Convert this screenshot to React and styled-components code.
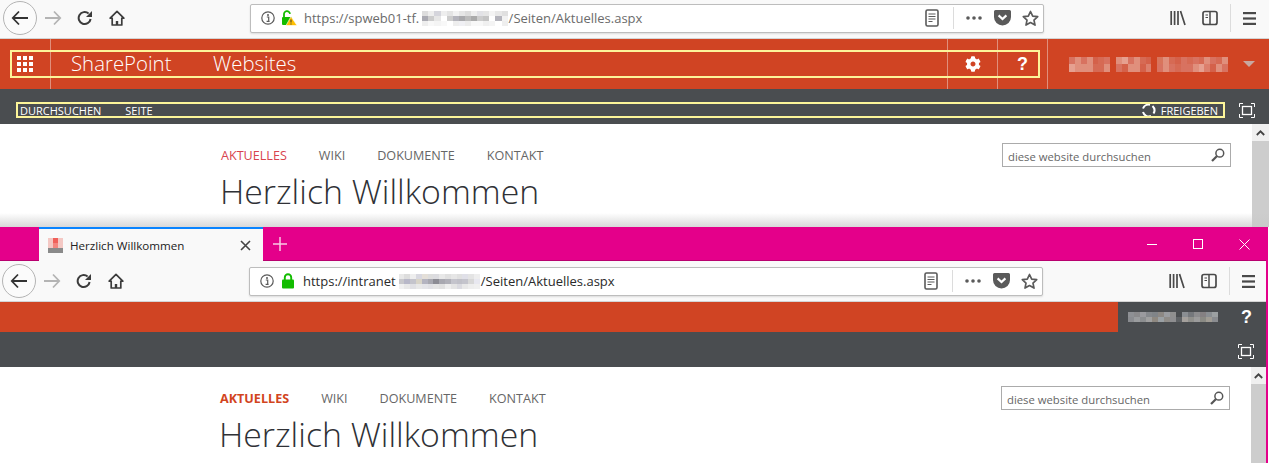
import styled, { createGlobalStyle } from "styled-components";
import { FaCog } from "react-icons/fa";

const Global = createGlobalStyle`
  html, body {
    margin: 0;
    padding: 0;
    width: 1269px;
    height: 463px;
    overflow: hidden;
    background: #fff;
    font-family: "Open Sans", "Liberation Sans", sans-serif;
  }
`;

const ORANGE = "#d04423";
const DARK = "#4a4d50";
const PINK = "#e4008a";
const YELLOW = "#fdf59a";

const Blur = ({ colors, cell = 6, rows = 2, height = 7 }) => (
  <BlurGrid $cols={Math.ceil(colors.length / rows)} $cell={cell} $height={height}>
    {colors.map((c, i) => (
      <i key={i} style={{ background: c }} />
    ))}
  </BlurGrid>
);

const Back = () => (
  <svg width="18" height="16" viewBox="0 0 18 16" fill="none" stroke="#333" strokeWidth="1.8">
    <path d="M8 1.5 1.8 8 8 14.5M2 8h15" />
  </svg>
);
const Forward = () => (
  <svg width="18" height="16" viewBox="0 0 18 16" fill="none" stroke="#b4b4b4" strokeWidth="1.8">
    <path d="M10 1.5 16.2 8 10 14.5M16 8H1" />
  </svg>
);
const Reload = () => (
  <svg width="16" height="16" viewBox="0 0 16 16" fill="none">
    <path d="M13.6 9a6 6 0 1 1-2-5.5" stroke="#3c3c3c" strokeWidth="2" />
    <path d="M15 1v6H9z" fill="#3c3c3c" />
  </svg>
);
const Home = () => (
  <svg width="16" height="16" viewBox="0 0 16 16" fill="none" stroke="#3c3c3c" strokeWidth="1.7">
    <path d="M8 1.4 1.2 8.2h2V15h9.6V8.2h2z" strokeLinejoin="round" />
    <path d="M6.8 15v-4h2.4v4" fill="#3c3c3c" stroke="none" />
  </svg>
);
const Info = () => (
  <svg width="14" height="14" viewBox="0 0 14 14" fill="none">
    <circle cx="7" cy="7" r="6.2" stroke="#5a5a5a" strokeWidth="1.2" />
    <circle cx="7" cy="3.9" r="1" fill="#5a5a5a" />
    <path d="M5.8 6h1.9v4.2M5.6 10.4h3" stroke="#5a5a5a" strokeWidth="1.2" />
  </svg>
);
const Lock = ({ open }) =>
  open ? (
    <svg width="16" height="16" viewBox="0 0 16 16" fill="none">
      <path d="M3 7V4.5a3 3 0 0 1 6-.6" stroke="#12bc00" strokeWidth="1.8" />
      <rect x="1" y="7" width="10" height="8" rx="1" fill="#12bc00" />
      <path d="M10 6.5 16 15.5H5z" fill="#ffbf00" stroke="#fff" strokeWidth=".6" />
      <path d="M10 9.5v3M10 13.5v1" stroke="#333" strokeWidth="1" />
    </svg>
  ) : (
    <svg width="14" height="16" viewBox="0 0 14 16" fill="none">
      <path d="M3.8 7V4.4a3.2 3.2 0 0 1 6.4 0V7" stroke="#12bc00" strokeWidth="1.9" />
      <rect x="1" y="6.5" width="12" height="9" rx="1" fill="#12bc00" />
    </svg>
  );
const Reader = () => (
  <svg width="14" height="18" viewBox="0 0 14 18" fill="none" stroke="#5a5a5a">
    <rect x="1" y="1" width="12" height="16" rx="1.5" strokeWidth="1.6" />
    <path d="M3.5 5h7M3.5 7.5h7M3.5 10h7M3.5 12.5h4" strokeWidth="1.1" />
  </svg>
);
const Dots = () => (
  <svg width="16" height="4" viewBox="0 0 16 4" fill="#5a5a5a">
    <circle cx="2" cy="2" r="1.8" />
    <circle cx="8" cy="2" r="1.8" />
    <circle cx="14" cy="2" r="1.8" />
  </svg>
);
const Pocket = () => (
  <svg width="17" height="16" viewBox="0 0 17 16">
    <path d="M1.5 0h14A1.5 1.5 0 0 1 17 1.5V7a8.5 8.5 0 0 1-17 0V1.5A1.5 1.5 0 0 1 1.5 0z" fill="#5a5a5a" />
    <path d="M4.6 5.4 8.5 9l3.9-3.6" fill="none" stroke="#fff" strokeWidth="2.2" />
  </svg>
);
const Star = () => (
  <svg width="17" height="17" viewBox="0 0 17 17" fill="none" stroke="#5a5a5a" strokeWidth="1.7" strokeLinejoin="round">
    <path d="m8.5 1.5 2.2 4.6 5 .6-3.7 3.4 1 5-4.5-2.5L4 15.100l1-5L1.300 6.700l5-.6z" />
  </svg>
);
const Library = () => (
  <svg width="16" height="16" viewBox="0 0 16 16" fill="none" stroke="#4a4a4a" strokeWidth="1.7">
    <path d="M1.200 1v14M4.600 1v14M8 1v14M10.500 1l4.500 14" />
  </svg>
);
const Sidebar = () => (
  <svg width="16" height="16" viewBox="0 0 16 16" fill="none" stroke="#4a4a4a">
    <rect x="1" y="1.500" width="14" height="13" rx="2" strokeWidth="1.700" />
    <path d="M8 2v12" strokeWidth="1.500" />
    <path d="M3.500 5h2.500M3.500 7.500h2.500" strokeWidth="1.200" />
  </svg>
);
const Burger = () => (
  <svg width="13" height="13" viewBox="0 0 13 13" fill="#4a4a4a">
    <rect y="0" width="13" height="2.200" />
    <rect y="5.400" width="13" height="2.200" />
    <rect y="10.800" width="13" height="2.200" />
  </svg>
);
const Waffle = () => (
  <svg width="16" height="16" viewBox="0 0 16 16" fill="#fff">
    {[0, 6, 12].flatMap((y) =>
      [0, 6, 12].map((x) => <rect key={`${x}-${y}`} x={x} y={y} width="4" height="4" />)
    )}
  </svg>
);
const Focus = () => (
  <svg width="16" height="15" viewBox="0 0 16 15" fill="none" stroke="#fff">
    <path d="M.5 4V.5H4M12 .5h3.500V4M15.500 11v3.500H12M4 14.500H.5V11" />
    <rect x="3.500" y="3.500" width="9" height="8" strokeWidth="1.300" />
  </svg>
);
const Sync = () => (
  <svg width="15" height="15" viewBox="0 0 15 15" fill="none" stroke="#fff" strokeWidth="2">
    <path d="M2 5.500A6 6 0 0 1 9 1.700" />
    <path d="M11.500 3A6 6 0 0 1 12.500 10.500" />
    <path d="M10 13A6 6 0 0 1 2 9" />
  </svg>
);
const Magnifier = () => (
  <svg width="14" height="14" viewBox="0 0 14 14" fill="none" stroke="#555">
    <circle cx="8.800" cy="5.200" r="3.900" strokeWidth="1.500" />
    <path d="M5.800 8.200 1 13" strokeWidth="2.200" />
  </svg>
);

const Toolbar = ({ left, height, lift, secure, urlStart, urlEnd, blur, blurCell, dim }) => (
  <Bar $left={left} $h={height} $lift={lift}>
    <BackCircle>
      <Back />
    </BackCircle>
    <ToolButton>
      <Forward />
    </ToolButton>
    <ToolButton>
      <Reload />
    </ToolButton>
    <ToolButton>
      <Home />
    </ToolButton>
    <UrlBox>
      <InfoSlot>
        <Info />
      </InfoSlot>
      <LockSlot>
        <Lock open={!secure} />
      </LockSlot>
      <UrlText $dim={dim}>{urlStart}</UrlText>
      <UrlBlur>
        <Blur colors={blur} cell={blurCell} rows={3} height={5} />
      </UrlBlur>
      <UrlText $dim={dim}>{urlEnd}</UrlText>
      <UrlActions>
        <UrlAction $w={20}>
          <Reader />
        </UrlAction>
        <UrlSep />
        <UrlAction $w={26} $gap={7}>
          <Dots />
        </UrlAction>
        <UrlAction $w={30}>
          <Pocket />
        </UrlAction>
        <UrlAction $w={26}>
          <Star />
        </UrlAction>
      </UrlActions>
    </UrlBox>
    <SideTools>
      <ToolButton>
        <Library />
      </ToolButton>
      <ToolButton>
        <Sidebar />
      </ToolButton>
      <ToolSep />
      <ToolButton $w={36}>
        <Burger />
      </ToolButton>
    </SideTools>
  </Bar>
);

const Content = ({ bold, nudge, scroll }) => (
  <Page>
    <Main $left={220 + nudge}>
      <TopLine>
        <Nav>
          <NavItem $active $bold={bold}>AKTUELLES</NavItem>
          <NavItem>WIKI</NavItem>
          <NavItem>DOKUMENTE</NavItem>
          <NavItem>KONTAKT</NavItem>
        </Nav>
        <SearchBox>
          <SearchText>diese website durchsuchen</SearchText>
          <Magnifier />
        </SearchBox>
      </TopLine>
      <Title>Herzlich Willkommen</Title>
    </Main>
    <Scrollbar $w={scroll}>
      <ScrollUp>
        <svg width="9" height="6" viewBox="0 0 9 6" fill="none" stroke="#444" strokeWidth="1.800">
          <path d="M.8 5 4.500 1.300 8.200 5" />
        </svg>
      </ScrollUp>
      <ScrollThumb />
    </Scrollbar>
  </Page>
);

const urlBlurA = ["#ddd", "#eee", "#d5d5dc", "#eee", "#e4e4e4", "#f2f2f2", "#e6e6e6", "#ddd", "#eee", "#e2e2e6", "#e5e5e5", "#f4f4f4", "#e8e8e8", "#e0e0e0", "#aaaab2", "#ccc", "#e6e6e6", "#fff", "#ccc", "#b4b4bc", "#a9a9ac", "#bbb", "#aaa", "#ccc", "#c4c4c4", "#fff", "#b4b4bc", "#f2f2f2", "#eee", "#f8f8f8", "#f4f4f4", "#f8f8f8", "#fff", "#eee", "#f0f0f4", "#ececec", "#f8f8f8", "#f8f8f8", "#f0f0f0", "#f4f4f4", "#fff", "#eee"];
const urlBlurB = ["#e8e8e8", "#ddd", "#eee", "#d8d8e0", "#e4dfd8", "#ddd", "#dcdce0", "#e8e8e8", "#e0e0e0", "#e6e6e6", "#e0e0e0", "#e0e0e8", "#e4e4e4", "#eee", "#c8c8cc", "#b8b8c8", "#c4c4cc", "#d8d4c8", "#b4b4c0", "#a8a8b0", "#8c8c94", "#a8a8b0", "#b0b0b8", "#c4c4cc", "#c0c0c8", "#c4c4cc", "#d8d8d8", "#e8e8f0", "#f0f0f0", "#e8e8e8", "#e0e0e4", "#e8e8e8", "#e4e4e8", "#e0e0e4", "#e4e4e4", "#e0e0e0", "#eee", "#e4e4e4", "#dadae0", "#e8e8e8", "#eee", "#f0f0f0"];
const userBlurA = ["#d87260", "#e08f7c", "#d87260", "#e08f7c", "#d4614a", "#d66a54", "#d87260", "#d04423", "#e08f7c", "#e6a090", "#d87260", "#e08f7c", "#d66a54", "#d4614a", "#d04423", "#d8755c", "#e08f7c", "#d66a54", "#d4614a", "#d87260", "#d66a54", "#d87260", "#d66a54", "#e08f7c", "#d87260", "#d66a54", "#e08f7c", "#e6a090", "#e08f7c", "#e08f7c", "#e08f7c", "#d66a54", "#d66a54", "#e08f7c", "#d04423", "#d87260", "#d4614a", "#e08f7c", "#e08f7c", "#d4614a", "#dc7f6c", "#d04423", "#d87260", "#e08f7c", "#d87260", "#d66a54", "#d87260", "#d87260", "#e08f7c", "#e6a090", "#dc7f6c", "#d4614a", "#e08f7c", "#d87260"];
const userBlurB = ["#8e9094", "#8a8a8c", "#9a9a9e", "#85888c", "#808488", "#8c8884", "#9a9ca0", "#8f8f8f", "#4a4d50", "#8a8e92", "#75787c", "#8c8c8e", "#848082", "#8a8e92", "#9ca0a2", "#8a8c90", "#9a9c9e", "#8c8e90", "#a0a0a0", "#8e8880", "#9aa0a4", "#8f8c88", "#8e8e90", "#5e6164", "#a4a09c", "#90908c", "#9c9c9c", "#8a8a84", "#a09c94", "#8a8c90"];

const App = () => (
  <>
    <Global />
    <WindowOne>
      <Toolbar
        left={3}
        height={36}
        lift={2}
        urlStart="https://spweb01-tf."
        urlEnd="/Seiten/Aktuelles.aspx"
        blur={urlBlurA}
        blurCell={6.100}
        dim
      />
      <SuiteBar $h={50}>
        <AppCell>
          <Waffle />
        </AppCell>
        <BrandCell $w={142}>SharePoint</BrandCell>
        <BrandCell $grow>Websites</BrandCell>
        <IconCell>
          <FaCog size={16} color="#fff" />
        </IconCell>
        <IconCell>
          <Question>?</Question>
        </IconCell>
        <UserCell>
          <Blur colors={userBlurA} cell={5.900} rows={2} height={7.500} />
          <Caret />
        </UserCell>
        <SuiteFrame />
      </SuiteBar>
      <RibbonBar>
        <RibbonLinks>
          <RibbonLink>DURCHSUCHEN</RibbonLink>
          <RibbonLink>SEITE</RibbonLink>
        </RibbonLinks>
        <ShareLink>
          <Sync />
          FREIGEBEN
        </ShareLink>
        <FocusSlot $w={44}>
          <Focus />
        </FocusSlot>
        <RibbonFrame />
      </RibbonBar>
      <Content nudge={1} scroll={17} />
      <FadeOut />
    </WindowOne>
    <WindowTwo>
      <TabStrip>
        <Tab>
          <Favicon>
            <i /><i /><i /><i /><i /><i /><i /><i /><i />
          </Favicon>
          <TabTitle>Herzlich Willkommen</TabTitle>
          <svg width="11" height="11" viewBox="0 0 11 11" stroke="#444" strokeWidth="1.600">
            <path d="M1 1l9 9M10 1l-9 9" />
          </svg>
        </Tab>
        <NewTab>
          <svg width="14" height="14" viewBox="0 0 14 14" stroke="#f8c9e4" strokeWidth="1.500">
            <path d="M7 0v14M0 7h14" />
          </svg>
        </NewTab>
        <WinControls>
          <WinButton>
            <svg width="10" height="10" viewBox="0 0 10 10" stroke="#fff"><path d="M0 5.500h10" /></svg>
          </WinButton>
          <WinButton>
            <svg width="10" height="10" viewBox="0 0 10 10" stroke="#fff" fill="none"><rect x=".5" y=".5" width="9" height="9" /></svg>
          </WinButton>
          <WinButton>
            <svg width="11" height="11" viewBox="0 0 11 11" stroke="#fff"><path d="M.5.5l10 10M10.500.5l-10 10" /></svg>
          </WinButton>
        </WinControls>
      </TabStrip>
      <Toolbar
        left={2}
        height={40}
        lift={0}
        secure
        urlStart="https://intranet"
        urlEnd="/Seiten/Aktuelles.aspx"
        blur={urlBlurB}
        blurCell={5.800}
      />
      <SuiteBar $h={30}>
        <Spacer />
        <DarkUser>
          <Blur colors={userBlurB} cell={6} rows={2} height={5} />
          <Question>?</Question>
        </DarkUser>
      </SuiteBar>
      <RibbonBar>
        <Spacer />
        <FocusSlot $w={40} $low>
          <Focus />
        </FocusSlot>
      </RibbonBar>
      <Content bold nudge={0} scroll={15} />
    </WindowTwo>
  </>
);

const BlurGrid = styled.span`
  display: inline-grid;
  grid-template-columns: repeat(${(p) => p.$cols}, ${(p) => p.$cell}px);
  grid-auto-rows: ${(p) => p.$height}px;
  flex: none;

  i {
    display: block;
  }
`;

const WindowOne = styled.section`
  position: relative;
  height: 227px;
  overflow: hidden;
  display: flex;
  flex-direction: column;
`;

const WindowTwo = styled.section`
  height: 236px;
  width: 1266px;
  margin-right: 1px;
  border-right: 2px solid ${PINK};
  overflow: hidden;
  display: flex;
  flex-direction: column;
`;

const FadeOut = styled.div`
  position: absolute;
  left: 0;
  right: 0;
  bottom: 0;
  height: 14px;
  background: linear-gradient(rgba(200, 200, 200, 0), rgba(200, 200, 200, 0.7));
`;

const Bar = styled.div`
  height: ${(p) => p.$h}px;
  flex: none;
  box-sizing: content-box;
  display: flex;
  align-items: center;
  padding-left: ${(p) => p.$left}px;
  padding-bottom: ${(p) => p.$lift}px;
  background: #f9f9f9;
  border-bottom: 1px solid #d4d4d4;
`;

const BackCircle = styled.div`
  width: 32px;
  height: 32px;
  flex: none;
  border: 1px solid #b4b4b4;
  border-radius: 50%;
  background: #fbfbfb;
  display: flex;
  align-items: center;
  justify-content: center;
`;

const ToolButton = styled.div`
  width: ${(p) => p.$w || 32}px;
  height: 30px;
  flex: none;
  display: flex;
  align-items: center;
  justify-content: center;
`;

const UrlBox = styled.div`
  width: 792px;
  height: 27px;
  margin-left: 117px;
  flex: none;
  display: flex;
  align-items: center;
  background: #fff;
  border: 1px solid #bdbdbd;
  border-radius: 2px;
  box-shadow: 0 1px 2px rgba(0, 0, 0, 0.12);
`;

const InfoSlot = styled.span`
  width: 16px;
  margin-left: 9px;
  display: flex;
  justify-content: center;
`;

const LockSlot = styled.span`
  width: 16px;
  margin-left: 5px;
  margin-right: 7px;
  display: flex;
  justify-content: center;
`;

const UrlText = styled.span`
  font-size: 13px;
  color: ${(p) => (p.$dim ? "#6b6b6b" : "#2a2a2a")};
  white-space: nowrap;
`;

const UrlBlur = styled.span`
  display: flex;
  margin: 0 1px 0 3px;
`;

const UrlActions = styled.div`
  margin-left: auto;
  display: flex;
  align-items: center;
  height: 100%;
`;

const UrlAction = styled.span`
  width: ${(p) => p.$w}px;
  margin-left: ${(p) => p.$gap || 0}px;
  display: flex;
  justify-content: center;
  align-items: center;
`;

const UrlSep = styled.span`
  width: 1px;
  height: 22px;
  margin: 0 0 0 11px;
  background: #dcdcdc;
`;

const SideTools = styled.div`
  display: flex;
  align-items: center;
  margin-left: 118px;
`;

const ToolSep = styled.span`
  width: 1px;
  height: 28px;
  margin-left: 4px;
  background: #dcdcdc;
`;

const SuiteBar = styled.div`
  position: relative;
  height: ${(p) => p.$h}px;
  flex: none;
  display: flex;
  background: ${ORANGE};
  color: #fff;
`;

const AppCell = styled.div`
  width: 50px;
  border-right: 1px solid #e08f7c;
  display: flex;
  align-items: center;
  justify-content: center;
`;

const BrandCell = styled.div`
  position: relative;
  ${(p) => (p.$grow ? "flex: 1;" : `width: ${p.$w}px;`)}
  box-sizing: border-box;
  padding-left: 20px;
  font-size: 20.400px;
  font-weight: 300;
  line-height: 49px;

  & + &::before {
    content: "";
    position: absolute;
    left: 0;
    top: 4px;
    bottom: 6px;
    width: 1px;
    background: #e08f7c;
  }
`;

const IconCell = styled.div`
  width: 50px;
  border-left: 1px solid #e08f7c;
  display: flex;
  align-items: center;
  justify-content: center;
  box-sizing: border-box;
`;

const Question = styled.span`
  font-family: "Liberation Sans", sans-serif;
  font-size: 18px;
  font-weight: 700;
  color: #fff;
`;

const UserCell = styled.div`
  width: 222px;
  border-left: 1px solid #e08f7c;
  box-sizing: border-box;
  display: flex;
  align-items: center;
  padding-left: 21px;
`;

const Caret = styled.span`
  width: 0;
  height: 0;
  margin-left: 15px;
  border-left: 6px solid transparent;
  border-right: 6px solid transparent;
  border-top: 6px solid #c8a8a0;
`;

const SuiteFrame = styled.div`
  position: absolute;
  left: 10px;
  top: 11px;
  width: 1026px;
  height: 24px;
  border: 2px solid ${YELLOW};
  pointer-events: none;
`;

const RibbonBar = styled.div`
  position: relative;
  height: 35px;
  flex: none;
  display: flex;
  align-items: center;
  background: ${DARK};
  color: #fff;
`;

const RibbonLinks = styled.div`
  display: flex;
  gap: 24px;
  padding: 8px 0 0 20px;
  flex: 1;
`;

const RibbonLink = styled.span`
  font-size: 11px;
  line-height: 14px;
`;

const ShareLink = styled.span`
  display: flex;
  align-items: center;
  gap: 5px;
  padding-top: 8px;
  margin-right: 7px;
  font-size: 11px;
  line-height: 14px;
`;

const FocusSlot = styled.span`
  width: ${(p) => p.$w}px;
  display: flex;
  justify-content: center;
  padding: ${(p) => (p.$low ? "4px" : "8px")} 0 0;
  box-sizing: border-box;
  margin-left: auto;
`;

const RibbonFrame = styled.div`
  position: absolute;
  left: 16px;
  top: 13px;
  width: 1205px;
  height: 12px;
  border: 2px solid ${YELLOW};
  pointer-events: none;
`;

const Page = styled.div`
  flex: 1;
  min-height: 0;
  display: flex;
  background: #fff;
`;

const Main = styled.div`
  flex: 1;
  padding-left: ${(p) => p.$left}px;
  padding-right: 21px;
`;

const TopLine = styled.div`
  display: flex;
  align-items: center;
  justify-content: space-between;
  margin-top: 19px;
  height: 24px;
`;

const Nav = styled.nav`
  display: flex;
  gap: 32px;
`;

const NavItem = styled.span`
  font-size: 12.600px;
  font-weight: ${(p) => (p.$bold ? 700 : 400)};
  color: ${(p) => (p.$bold ? "#d2451e" : p.$active ? "#d8434e" : "#666")};
`;

const SearchBox = styled.div`
  width: 229px;
  height: 24px;
  box-sizing: border-box;
  border: 1px solid #ababab;
  display: flex;
  align-items: center;
  justify-content: space-between;
  padding: 0 5px 0 5px;
`;

const SearchText = styled.span`
  font-size: 11.300px;
  padding-top: 3px;
  color: #666;
`;

const Title = styled.h1`
  margin: 2px 0 0 -1px;
  font-size: 33.800px;
  line-height: 44px;
  font-weight: 300;
  color: #2f3136;
  white-space: nowrap;
`;

const Scrollbar = styled.div`
  width: ${(p) => p.$w}px;
  flex: none;
  display: flex;
  flex-direction: column;
  background: #f0f0f0;
`;

const ScrollUp = styled.div`
  height: 17px;
  display: flex;
  align-items: center;
  justify-content: center;
`;

const ScrollThumb = styled.div`
  flex: 1;
  background: #cdcdcd;
`;

const TabStrip = styled.div`
  height: 34px;
  flex: none;
  display: flex;
  background: ${PINK};
  box-shadow: inset 0 -1px #b8006f;
`;

const Tab = styled.div`
  width: 224px;
  margin-left: 39px;
  box-sizing: border-box;
  border-top: 2px solid #0a84ff;
  background: #f9f9f9;
  display: flex;
  align-items: center;
  padding: 0 12px 0 9px;
`;

const Favicon = styled.span`
  display: grid;
  grid-template-columns: repeat(3, 5px);
  grid-auto-rows: 5px;

  i {
    background: #f4c8c4;
  }
  i:nth-child(2) {
    background: #f0605a;
  }
  i:nth-child(5) {
    background: #f4857e;
  }
  i:nth-child(n + 7) {
    background: #8a8a8a;
  }
`;

const TabTitle = styled.span`
  flex: 1;
  margin-left: 7px;
  font-size: 11.600px;
  color: #222;
`;

const NewTab = styled.div`
  width: 34px;
  display: flex;
  align-items: center;
  justify-content: center;
`;

const WinControls = styled.div`
  margin-left: auto;
  margin-right: -1px;
  display: flex;
`;

const WinButton = styled.div`
  width: 46px;
  display: flex;
  align-items: center;
  justify-content: center;
`;

const DarkUser = styled.div`
  width: 148px;
  background: ${DARK};
  display: flex;
  align-items: center;
  justify-content: space-between;
  box-sizing: border-box;
  padding: 0 14px 0 10px;
`;

const Spacer = styled.div`
  flex: 1;
`;

export default App;
